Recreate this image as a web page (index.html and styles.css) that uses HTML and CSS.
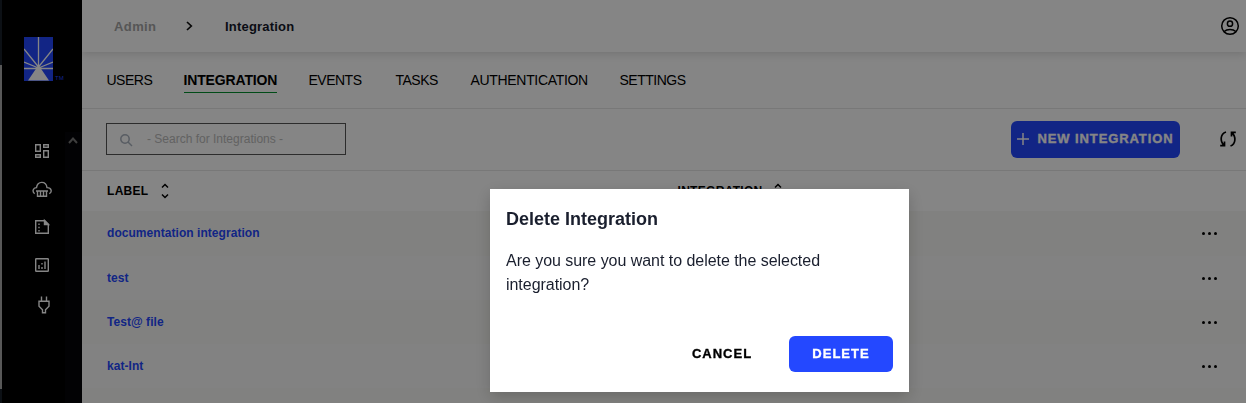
FILE: index.html
```html
<!DOCTYPE html>
<html lang="en">
<head>
<meta charset="utf-8">
<title>Integration</title>
<link rel="stylesheet" href="styles.css">
</head>
<body>
<div class="app">
  <div class="edge"></div>
  <aside class="sidebar">
    <div class="logo">
      <svg width="29" height="44" viewBox="0 0 29 44"><rect width="29" height="44" fill="#2448ff"/><g stroke="#fff" stroke-width="1.3" fill="none"><path d="M14.5 0v31M0 12l14.5 18M29 12L14.5 30M0 25l14.5 6M29 25l-14.500 6M0 31.500h29"/></g><path d="M14.500 28l2 3L25 43.500H4L12.500 31z" fill="#fff"/></svg>
      <span class="tm">TM</span>
    </div>
    <nav class="rail">
      <svg width="20" height="20" viewBox="0 0 20 20"><path d="M3.700 3.700h4.600v6.600H3.700zM11.700 3.700h4.600v2.600h-4.600zM3.700 13.700h4.600v2.600H3.700zM11.700 9.700h4.600v6.600h-4.600z"/></svg>
      <svg width="20" height="20" viewBox="0 0 20 20"><path d="M2.700 14.700C.2 13 .5 9 4.500 8.600 5.500 1.700 14 1.500 15 8.600c4.500-.2 5.500 4.400 2.300 6.100M4 12h12M5.500 12v5.300h9V12M8.500 12v5.300M11.500 12v5.300"/></svg>
      <svg width="20" height="20" viewBox="0 0 20 20"><path d="M3.700 3.700h9l3.600 3.600v9H3.700z"/><path class="solid" d="M12.500 3.500v4h4z"/><path d="M7 6.500v8" stroke-dasharray="1.500 1.700"/></svg>
      <svg width="20" height="20" viewBox="0 0 20 20"><rect x="3.700" y="3.700" width="12.600" height="12.600" rx=".6"/><path d="M7 10v4M10 8v1.500M10 12v2M13 6.500V14"/></svg>
      <svg class="plug" width="20" height="20" viewBox="0 0 20 20"><path d="M7.500 1.500v4.500M12.500 1.500v4.500M5 6.200h10v5l-3.500 3.500v3h-3v-3L5 11.200z"/></svg>
    </nav>
    <div class="scroll"><svg width="10" height="7" viewBox="0 0 10 7"><path d="M1 6l4-4.500L9 6"/></svg></div>
  </aside>
  <main class="main">
    <header class="topbar">
      <span class="crumb-parent">Admin</span>
      <svg class="chev" width="7" height="10" viewBox="0 0 7 10"><path d="M1 1l4.300 4L1 9"/></svg>
      <span class="crumb">Integration</span>
      <svg class="user" width="20" height="20" viewBox="0 0 20 20"><circle cx="10" cy="10" r="8.300"/><circle cx="10" cy="7.700" r="2.600"/><path d="M4.200 15.500c2.800-2.700 8.800-2.700 11.600 0"/></svg>
    </header>
    <nav class="tabs">
      <span>USERS</span><span class="active">INTEGRATION</span><span>EVENTS</span><span>TASKS</span><span class="auth">AUTHENTICATION</span><span>SETTINGS</span>
    </nav>
    <section class="toolbar">
      <div class="search">
        <svg width="13" height="13" viewBox="0 0 13 13"><circle cx="5" cy="5" r="4.200"/><path d="M8 8l4 4"/></svg>
        <span>- Search for Integrations -</span>
      </div>
      <button class="btn new"><svg width="12" height="12" viewBox="0 0 12 12"><path d="M6 0v12M0 6h12"/></svg><span>NEW INTEGRATION</span></button>
      <svg class="sync" width="18" height="18" viewBox="0 0 18 18"><path d="M7 2C1 4 .8 11.500 5.300 15.500M1.200 15.700h4.300V11.500M11.500 16c5.500-2 5.700-9.500 1.200-13.500M16.800 2.300h-4.300v4.200"/></svg>
    </section>
    <section class="table">
      <div class="head">
        <div class="col"><span>LABEL</span><svg class="sort" width="8" height="16" viewBox="0 0 8 16"><path d="M1 4.500l3-3 3 3M1 11.500l3 3 3-3"/></svg></div>
        <div class="col"><span class="wide">INTEGRATION</span><svg class="sort" width="8" height="16" viewBox="0 0 8 16"><path d="M1 4.500l3-3 3 3M1 11.500l3 3 3-3"/></svg></div>
      </div>
      <div class="row first"><a>documentation integration</a><span class="dots"><i></i><i></i><i></i></span></div>
      <div class="row"><a>test</a><span class="dots"><i></i><i></i><i></i></span></div>
      <div class="row"><a>Test@ file</a><span class="dots"><i></i><i></i><i></i></span></div>
      <div class="row"><a>kat-Int</a><span class="dots"><i></i><i></i><i></i></span></div>
      <div class="row last"></div>
    </section>
  </main>
</div>
<div class="overlay">
  <div class="modal">
    <h2>Delete Integration</h2>
    <p>Are you sure you want to delete the selected integration?</p>
    <div class="actions"><button class="btn cancel">CANCEL</button><button class="btn delete">DELETE</button></div>
  </div>
</div>
</body>
</html>
```
FILE: styles.css
```css
* { box-sizing: border-box; }
body { margin: 0; height: 403px; overflow: hidden; font-family: "Liberation Sans", Arial, sans-serif; color: #000; background: #fff; }
svg { display: block; flex: none; fill: none; stroke: currentColor; }
.app { display: flex; height: 403px; }
.edge { width: 2px; background: linear-gradient(#18202a 65px, #aaa 65px, #aaa 389px, #18202a 389px); }
.sidebar { position: relative; width: 80px; background: #000; color: #fff; }
.logo { display: flex; align-items: flex-end; padding: 37px 0 0 22px; }
.logo svg { stroke: none; }
.tm { color: #2448ff; font-size: 6px; line-height: 6px; margin-left: 2px; }
.rail { display: flex; flex-direction: column; align-items: flex-start; gap: 18px; padding: 60px 0 0 30px; }
.rail svg { stroke-width: 1.4; }
.rail .solid { fill: #fff; }
.rail .plug { margin: 2px 0 0 2px; }
.scroll { position: absolute; left: 63px; top: 132px; width: 17px; height: 271px; background: #050508; color: #777; padding: 5px 3px; }
.scroll svg { stroke-width: 2; }
.main { flex: 1; min-width: 0; }
.topbar { position: relative; display: flex; align-items: center; height: 52px; padding: 0 6px 0 32px; font-size: 13px; font-weight: 700; box-shadow: 0 2px 8px rgba(0,0,0,.14); }
.crumb-parent { width: 72px; color: #a5a5a5; letter-spacing: .4px; }
.chev { stroke: #111; stroke-width: 1.700; }
.crumb { margin-left: 32px; color: #14172a; letter-spacing: .2px; }
.user { margin-left: auto; stroke-width: 1.500; }
.tabs { display: grid; grid-template-columns: 45px 93px 55px 43px 117px 66px; column-gap: 32px; align-items: center; height: 57px; padding-left: 24.500px; border-bottom: 1px solid #e7e7e7; font-size: 14px; letter-spacing: -.5px; white-space: nowrap; }
.tabs span { height: 26px; line-height: 26px; margin-top: -1px; border-bottom: 1px solid transparent; }
.tabs .active { font-weight: 700; letter-spacing: -.15px; border-color: #00912c; }
.tabs .auth { letter-spacing: -.32px; }
.toolbar { display: flex; align-items: center; height: 61px; padding: 0 9px 1px 24px; }
.search { display: flex; align-items: center; width: 240px; height: 32px; border: 1px solid #555; padding-left: 13px; color: #bcbcbc; font-size: 12px; letter-spacing: 0; }
.search svg { color: #aab2be; stroke-width: 1.500; margin-top: 2px; }
.search span { margin-left: 14px; }
.btn { display: flex; align-items: center; justify-content: center; height: 36px; border: 0; border-radius: 6px; background: #2448ff; color: #fff; font: 700 13px "Liberation Sans", Arial, sans-serif; -webkit-text-stroke: .35px currentColor; letter-spacing: 1px; padding: 0 0 1px; white-space: nowrap; }
.new { width: 169px; margin-left: auto; height: 37px; letter-spacing: .9px; }
.new svg { margin-right: 8px; stroke-width: 1.500; }
.sync { margin-left: 39px; stroke-width: 1.700; }
.head { display: flex; align-items: center; height: 41px; border-top: 1px solid #e7e7e7; padding-left: 25px; font-size: 12px; font-weight: 700; }
.col { display: flex; align-items: center; width: 571px; letter-spacing: .3px; }
.sort { margin-left: 12px; stroke-width: 1.500; }
.wide { margin-left: 1px; }
.wide + .sort { margin-left: 11px; }
.row { display: flex; align-items: center; justify-content: space-between; height: 44px; padding: 0 29px 0 25px; background: #fafafa; font-size: 12px; }
.row:nth-child(even) { background: #f8f8f5; }
.row.first { height: 45px; padding-bottom: 1px; }
.row.last { height: 15px; }
.row a { color: #2448ff; font-weight: 700; letter-spacing: .05px; }
.dots { display: flex; gap: 3px; }
.dots i { width: 3px; height: 3px; border-radius: 50%; background: #000; }
.overlay { position: fixed; inset: 0; background: rgba(0,0,0,.48); padding: 189px 0 0 490px; }
.modal { width: 419px; height: 203px; background: #fff; padding: 19px 16px 20px; box-shadow: 0 5px 15px rgba(0,0,0,.2); display: flex; flex-direction: column; color: #1a1f2e; }
h2 { margin: 0; font-size: 18px; line-height: 22px; letter-spacing: 0; }
p { margin: 19px 0 0; font-size: 16px; line-height: 24px; letter-spacing: -.04px; width: 345px; }
.actions { display: flex; justify-content: flex-end; gap: 15px; margin-top: auto; }
.cancel { width: 104px; background: transparent; color: #000; }
.delete { width: 104px; }
```
